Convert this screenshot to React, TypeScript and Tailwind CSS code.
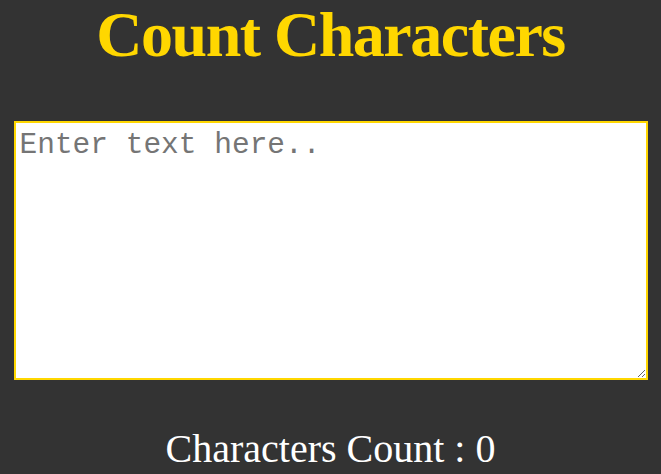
import { useState } from "react";

export default function App() {
  const [text, setText] = useState("");

  return (
    <div className="min-h-[474px] w-full bg-[#333333] flex flex-col items-center">
      <h1 className="-mt-[2px] font-['Liberation_Serif',serif] font-bold text-[64px] leading-[74px] tracking-[-1.5px] text-[#ffd700]">
        Count Characters
      </h1>
      <textarea
        className="mt-[49px] w-[634px] h-[259px] border-2 border-[#ffd700] bg-white px-[4px] pt-[5px] font-['Liberation_Mono',monospace] text-[29.5px] leading-[34px] text-black placeholder:text-[#757575] outline-none"
        placeholder="Enter text here.."
        value={text}
        onChange={(e) => setText(e.target.value)}
      />
      <p className="mt-[46px] font-['Liberation_Serif',serif] text-[40px] leading-[46px] text-white">
        Characters Count : {text.length}
      </p>
    </div>
  );
}
